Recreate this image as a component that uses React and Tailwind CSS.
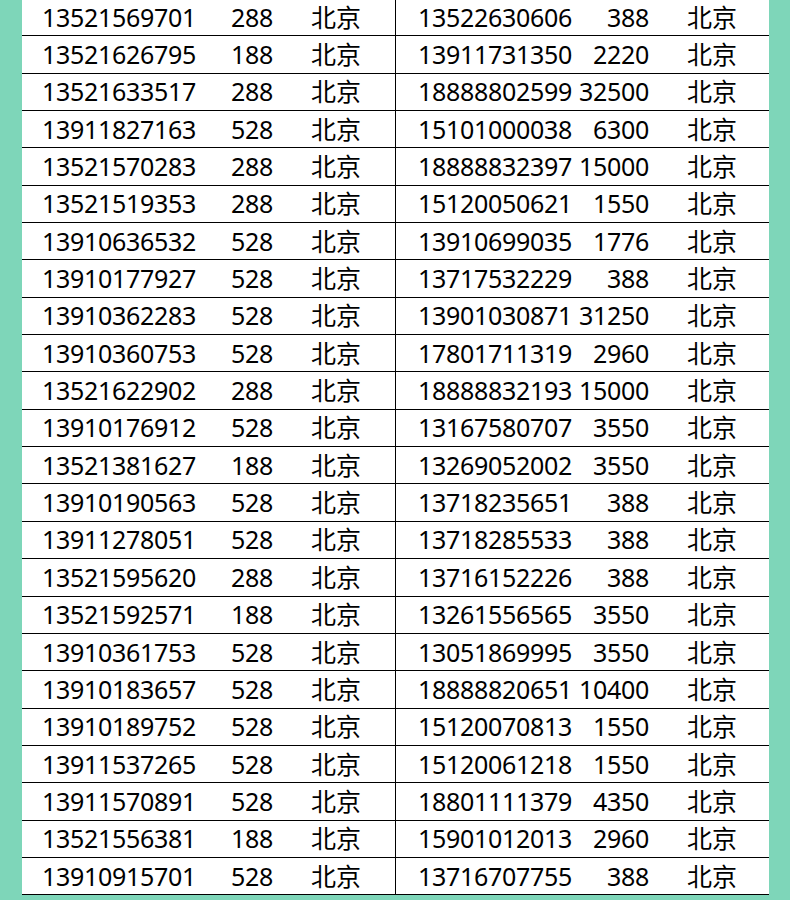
const left = [
  ["13521569701", "288"],
  ["13521626795", "188"],
  ["13521633517", "288"],
  ["13911827163", "528"],
  ["13521570283", "288"],
  ["13521519353", "288"],
  ["13910636532", "528"],
  ["13910177927", "528"],
  ["13910362283", "528"],
  ["13910360753", "528"],
  ["13521622902", "288"],
  ["13910176912", "528"],
  ["13521381627", "188"],
  ["13910190563", "528"],
  ["13911278051", "528"],
  ["13521595620", "288"],
  ["13521592571", "188"],
  ["13910361753", "528"],
  ["13910183657", "528"],
  ["13910189752", "528"],
  ["13911537265", "528"],
  ["13911570891", "528"],
  ["13521556381", "188"],
  ["13910915701", "528"],
];

const right = [
  ["13522630606", "388"],
  ["13911731350", "2220"],
  ["18888802599", "32500"],
  ["15101000038", "6300"],
  ["18888832397", "15000"],
  ["15120050621", "1550"],
  ["13910699035", "1776"],
  ["13717532229", "388"],
  ["13901030871", "31250"],
  ["17801711319", "2960"],
  ["18888832193", "15000"],
  ["13167580707", "3550"],
  ["13269052002", "3550"],
  ["13718235651", "388"],
  ["13718285533", "388"],
  ["13716152226", "388"],
  ["13261556565", "3550"],
  ["13051869995", "3550"],
  ["18888820651", "10400"],
  ["15120070813", "1550"],
  ["15120061218", "1550"],
  ["18801111379", "4350"],
  ["15901012013", "2960"],
  ["13716707755", "388"],
];

// one half of the sheet: phone / price / city
function Column({ rows, pad }) {
  return (
    <div>
      {rows.map(([phone, price]) => (
        <div key={phone} className={`flex h-[37.35px] items-center border-b border-black ${pad}`}>
          <span className="w-[158px] shrink-0 whitespace-nowrap tracking-[-0.3px]">{phone}</span>
          <span className="w-[73px] shrink-0 whitespace-nowrap text-right tracking-[-0.3px]">{price}</span>
          <span className="ml-[38px]">北京</span>
        </div>
      ))}
    </div>
  );
}

export default function App() {
  return (
    <div className="h-[900px] w-[790px] overflow-hidden bg-[#7ed6b9] pl-[22px] pr-[21px]">
      <div
        className="-mt-px grid grid-cols-[374px_373px] bg-white text-[25px] leading-none text-black"
        style={{ fontFamily: '"Noto Sans", "Noto Sans CJK SC", sans-serif' }}
      >
        <div className="border-r border-black">
          <Column rows={left} pad="pl-[20px]" />
        </div>
        <Column rows={right} pad="pl-[22px]" />
      </div>
    </div>
  );
}
